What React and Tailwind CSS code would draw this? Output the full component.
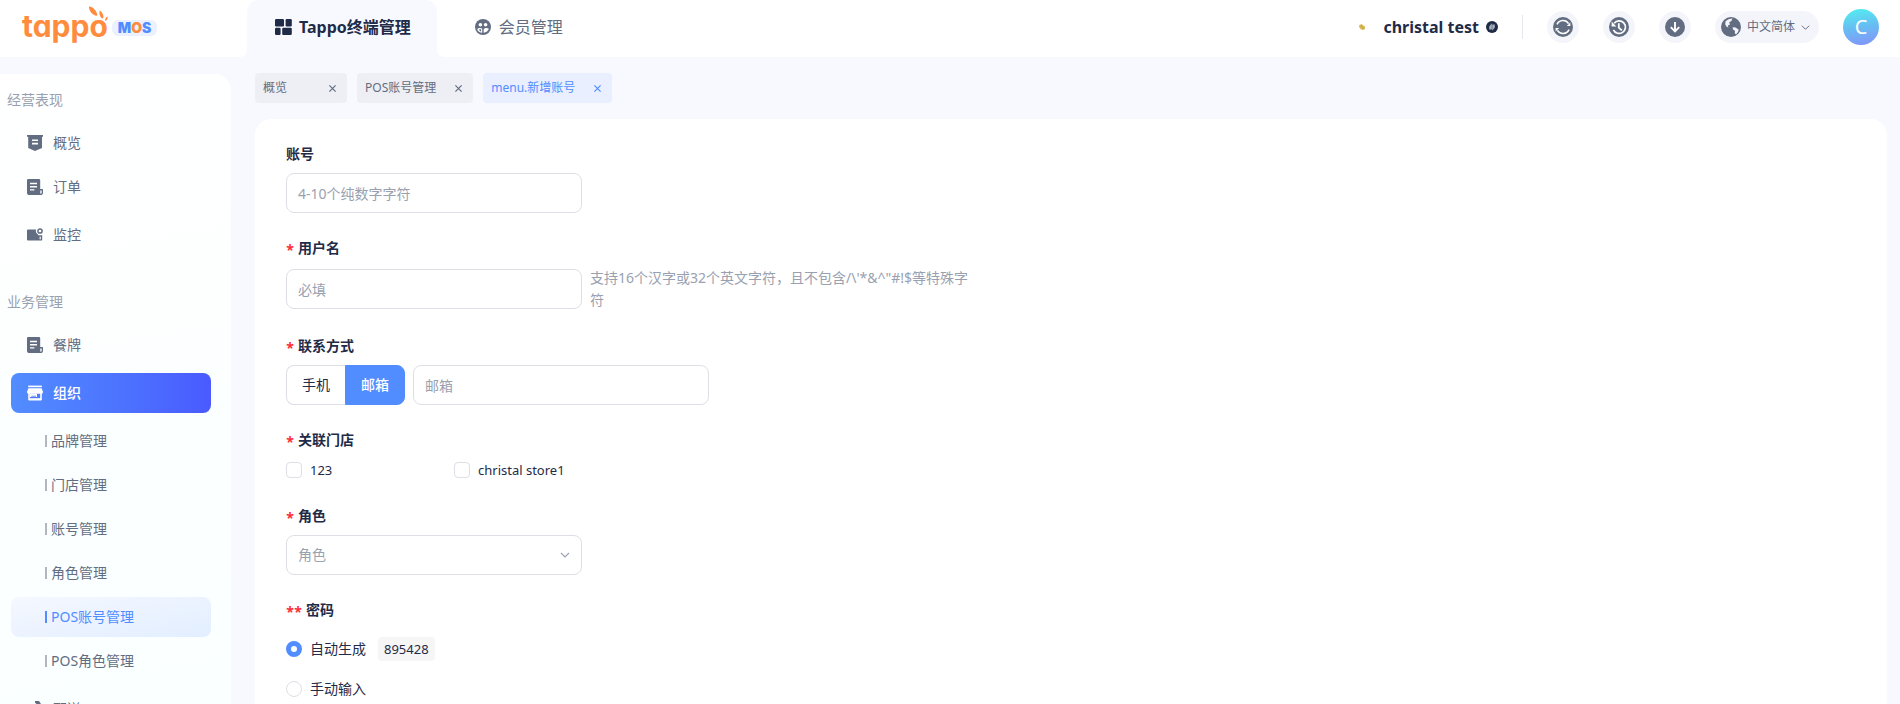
import { useState } from "react";

const CONCAVE = "absolute bottom-0 h-2 w-2";

/* ---------- icons ---------- */

function GridIcon() {
  return (
    <svg width="17" height="16" viewBox="0 0 17 16" fill="currentColor" aria-hidden="true">
      <rect x="0" y="0" width="9" height="7.4" rx="1.2" />
      <rect x="10.6" y="0" width="6.2" height="7.4" rx="1.2" />
      <rect x="0" y="8.8" width="5.6" height="7.2" rx="1.2" />
      <rect x="7.2" y="8.8" width="9.6" height="7.2" rx="1.2" />
    </svg>
  );
}

function MembersIcon() {
  return (
    <svg width="16" height="16" viewBox="0 0 16 16" aria-hidden="true">
      <circle cx="8" cy="8" r="8" fill="currentColor" />
      <circle cx="5.4" cy="5.8" r="1.8" fill="#fff" />
      <circle cx="10.6" cy="5.8" r="1.8" fill="#fff" />
      <path d="M2.2 10.2C3 8.8 5.6 8.4 7.2 9.6V13.8C4.8 13.6 2.8 12.4 2.2 10.2Z" fill="#fff" />
      <path d="M8.6 10.4C9.8 8.8 12.4 8.6 13.8 9.8C13.2 12 11.2 13.6 8.6 13.8Z" fill="#fff" />
      <path d="M4 10.8C4.8 10.2 5.6 10.2 6.2 10.5L6 12.4C5 12.2 4.3 11.6 4 10.8Z" fill="currentColor" />
    </svg>
  );
}

function BannerIcon() {
  return (
    <svg width="16" height="16" viewBox="0 0 16 16" aria-hidden="true">
      <path d="M0 0H16V1.8H15V13L8 16L1.2 13V1.8H0Z" fill="currentColor" />
      <path d="M5 4.4H11V6H5ZM5 7.8H11V9.4H5Z" fill="#fff" />
    </svg>
  );
}

function OrderIcon() {
  return (
    <svg width="16" height="16" viewBox="0 0 16 16" aria-hidden="true">
      <path
        d="M1.2 0H12A1.2 1.2 0 0 1 13.2 1.2V10H15.4Q16 10 16 10.6V13.4A2.6 2.6 0 0 1 13.4 16H2.6A2.6 2.6 0 0 1 0 13.4V1.2A1.2 1.2 0 0 1 1.2 0Z"
        fill="currentColor"
      />
      <path d="M3 3.8H10V5.2H3ZM3 7H10V8.4H3ZM3 10.2H7.4V11.6H3Z" fill="#fff" />
      <path d="M13.3 11.4H14.7V13.4A1.2 1.2 0 0 1 13.3 14.6Z" fill="#fff" />
    </svg>
  );
}

function MonitorIcon() {
  return (
    <svg width="16" height="16" viewBox="0 0 16 16" aria-hidden="true">
      <path d="M1 2.4H9.2A4 4 0 0 0 10.4 7L11 7.6V13.6H1A1 1 0 0 1 0 12.6V3.4A1 1 0 0 1 1 2.4Z" fill="currentColor" />
      <circle cx="13" cy="4" r="2.1" fill="none" stroke="currentColor" strokeWidth="1.5" />
      <path d="M10.8 8.2H15.2V12.4Q15.2 13.6 14 13.6H10.8Z" fill="currentColor" />
      <path d="M12.6 9.8H13.8V12.2H12.6Z" fill="#fff" />
    </svg>
  );
}

function ShopIcon() {
  return (
    <svg width="16" height="16" viewBox="0 0 16 16" aria-hidden="true">
      <path d="M1.2 0.6H14.8V2.2H1.2Z" fill="currentColor" />
      <path d="M1.4 3.2H14.6L16 6.8Q15.9 8.6 14.8 8.8V14.4Q14.8 15.4 13.8 15.4H2.2Q1.2 15.4 1.2 14.4V8.8Q0.1 8.6 0 6.8Z" fill="currentColor" />
      <path d="M2.8 8.8H13.2V13.2H2.8Z" fill="#4f7dff" />
      <path d="M2.8 8.8H10V12H2.8Z" fill="currentColor" />
      <path d="M4.2 10.6H9V12H4.2Z" fill="#8fb0ff" />
    </svg>
  );
}

function DeliveryIcon() {
  return (
    <svg width="16" height="16" viewBox="0 0 16 16" aria-hidden="true">
      <path d="M8 0H12L14 3H16V5.4H14.2L15 9H11.4L10 5L8.6 3.6L4.8 9H0.6Q1 5 4.6 4.6H7L9.4 2H8Z" fill="currentColor" />
      <circle cx="3.6" cy="12" r="2.2" fill="none" stroke="currentColor" strokeWidth="1.6" />
      <circle cx="12.8" cy="12" r="2.2" fill="none" stroke="currentColor" strokeWidth="1.6" />
    </svg>
  );
}

function SyncIcon() {
  return (
    <svg width="20" height="20" viewBox="0 0 20 20" aria-hidden="true">
      <circle cx="10" cy="10" r="10" fill="currentColor" />
      <path d="M4 7.4A6.6 6.6 0 0 1 15.6 6.6" fill="none" stroke="#fff" strokeWidth="1.6" />
      <path d="M16 12.6A6.6 6.6 0 0 1 4.4 13.4" fill="none" stroke="#fff" strokeWidth="1.6" />
      <path d="M17.4 5.4V9H13.8Z" fill="#fff" />
      <path d="M2.6 14.6V11H6.2Z" fill="#fff" />
    </svg>
  );
}

function HistoryIcon() {
  return (
    <svg width="20" height="20" viewBox="0 0 20 20" aria-hidden="true">
      <circle cx="10" cy="10" r="10" fill="currentColor" />
      <path d="M5.2 6.2A6.3 6.3 0 1 1 4.4 12.8" fill="none" stroke="#fff" strokeWidth="1.7" />
      <path d="M2.6 4.6V9.6H7.4Z" fill="#fff" />
      <path d="M9.8 6.2V10.6L12.8 13.4" fill="none" stroke="#fff" strokeWidth="1.8" />
    </svg>
  );
}

function DownloadIcon() {
  return (
    <svg width="20" height="20" viewBox="0 0 20 20" aria-hidden="true">
      <circle cx="10" cy="10" r="10" fill="currentColor" />
      <path d="M10 5V14M5.8 10.2L10 14.4L14.2 10.2" fill="none" stroke="#fff" strokeWidth="1.9" />
    </svg>
  );
}

function GlobeIcon() {
  return (
    <svg width="20" height="20" viewBox="0 0 20 20" aria-hidden="true">
      <circle cx="10" cy="10" r="10" fill="currentColor" />
      <path d="M4.6 4.2Q7.4 1.4 11.4 1.6L10.4 4L8.2 5.2L9 7.4L6.8 8.4L7.4 10.4L5.4 9.6L4.2 7.2Z" fill="#f4f5fb" />
      <path d="M11.6 10.2L14.6 10.6L17.8 12.8Q17.2 15.6 15.2 17.2L13.8 16.4L14 13.8L12 12.4Z" fill="#f4f5fb" />
    </svg>
  );
}

function SwitchIcon() {
  return (
    <svg width="12" height="12" viewBox="0 0 12 12" aria-hidden="true">
      <circle cx="6" cy="6" r="6" fill="currentColor" />
      <path d="M5.8 2.2V8.4H3.2V5.6L5.8 2.2ZM6.2 9.8V3.6H8.8V6.4L6.2 9.8Z" fill="#aab1c0" />
    </svg>
  );
}

function CoinIcon() {
  return (
    <svg width="6" height="6" viewBox="0 0 6 6" aria-hidden="true">
      <path d="M0 1.2L2.6 0L4.2 1.2L6 2.6V5L4 6L1.6 5.2L0.4 3.4Z" fill="#dcbb58" />
      <path d="M1.4 1.8L3.2 2.6M3 4.2L4.8 3.8" stroke="#9c8436" strokeWidth="0.6" />
    </svg>
  );
}

function ChevronDown({ size }) {
  return (
    <svg width={size} height={size} viewBox="0 0 10 10" fill="none" stroke="currentColor" strokeWidth="1.1" aria-hidden="true">
      <path d="M1 3L5 7L9 3" />
    </svg>
  );
}

function CloseIcon() {
  return (
    <svg width="9" height="9" viewBox="0 0 9 9" fill="none" stroke="currentColor" strokeWidth="1.2" aria-hidden="true">
      <path d="M1.4 1.4L7.6 7.6M7.6 1.4L1.4 7.6" />
    </svg>
  );
}

/* ---------- header ---------- */

function Logo() {
  return (
    <a href="#home" className="flex items-center" aria-label="tappo MOS">
      <span className="relative text-[30px] leading-10 font-bold text-[#ff8b3d] [font-family:Inter,sans-serif] [font-feature-settings:'cv11']">
        tappo
        <svg className="absolute top-0 right-0" width="20" height="16" viewBox="0 0 20 16" fill="#ff8b3d" aria-hidden="true">
          <path d="M1 0.6C3.6 0 9 4.6 9.4 9.6C5.6 10.6 0.6 5.2 1 0.6Z" />
          <path d="M11.6 4.8C13.8 5 16 9.6 15.2 12.6C12.4 12.6 10.8 8 11.6 4.8Z" />
          <path d="M19.6 10.4C20.2 12 18.8 14.8 17.2 15C16.8 13 18 10.6 19.6 10.4Z" />
        </svg>
      </span>
      <span className="mt-1 ml-1 flex h-4 items-center rounded-md bg-[#ebf1ff] px-[6px] text-sm leading-4 font-black text-[#528dff] [font-family:Inter,sans-serif]">
        M<span className="text-[#ff8b3d]">O</span>S
      </span>
    </a>
  );
}

function RoundButton({ label, children }) {
  return (
    <button type="button" aria-label={label} className="flex h-8 w-8 items-center justify-center rounded-full bg-[#f4f5fb] text-[#636d82]">
      {children}
    </button>
  );
}

function Header() {
  return (
    <header className="flex h-[57px] shrink-0 items-center bg-white pr-[21px]">
      <div className="w-[247px] shrink-0 pb-[6px] pl-[22px]">
        <Logo />
      </div>
      <nav className="flex h-full items-stretch">
        <a
          href="#terminal"
          className="relative flex items-center gap-[7px] rounded-t-xl bg-[#f8f9fe] pr-[26px] pb-[3px] pl-7 text-base font-bold text-[#1f2b47]"
        >
          <span className={CONCAVE + " -left-2 bg-[radial-gradient(circle_at_0_0,#fff_8px,#f8f9fe_8px)]"} />
          <GridIcon />
          <span>Tappo终端管理</span>
          <span className={CONCAVE + " -right-2 bg-[radial-gradient(circle_at_100%_0,#fff_8px,#f8f9fe_8px)]"} />
        </a>
        <a href="#members" className="flex items-center gap-2 pb-[3px] pl-[38px] text-base text-[#636d82]">
          <MembersIcon />
          <span>会员管理</span>
        </a>
      </nav>
      <div className="ml-auto flex items-center gap-6 pb-[3px]">
        <div className="flex items-center text-[#1f2b47]">
          <CoinIcon />
          <span className="mr-[7px] ml-[18px] text-base font-bold">christal test</span>
          <SwitchIcon />
        </div>
        <span className="h-6 w-px bg-[#e6e8ee]" />
        <RoundButton label="同步"><SyncIcon /></RoundButton>
        <RoundButton label="历史"><HistoryIcon /></RoundButton>
        <RoundButton label="下载"><DownloadIcon /></RoundButton>
        <button type="button" className="flex h-8 items-center gap-[6px] rounded-full bg-[#f4f5fb] pr-[9px] pl-[6px] text-xs text-[#636d82]">
          <GlobeIcon />
          <span>中文简体</span>
          <ChevronDown size={9} />
        </button>
        <button type="button" className="flex h-9 w-9 items-center justify-center rounded-full bg-linear-170 from-[#4ff0f0] via-[#66bdf2] to-[#8290fa] text-xl text-white">
          C
        </button>
      </div>
    </header>
  );
}

/* ---------- sidebar ---------- */

const ORG_ITEMS = ["品牌管理", "门店管理", "账号管理", "角色管理", "POS账号管理", "POS角色管理"];

function NavItem({ icon, label, active, group }) {
  return (
    <li className={group ? "py-1" : ""}>
      <a
        href={"#" + label}
        className={
          "flex h-10 items-center gap-[10px] rounded-lg pl-4 " +
          (active ? "bg-linear-to-r from-[#528dff] to-[#4a5aff] font-medium text-white" : "text-[#636d82]")
        }
      >
        {icon}
        <span>{label}</span>
      </a>
    </li>
  );
}

function SubItem({ label, active }) {
  return (
    <li>
      <a
        href={"#" + label}
        className={
          "flex h-10 items-center gap-1 rounded-lg pl-[34px] " +
          (active ? "bg-linear-to-br from-[#f5f8ff] to-[#e2eeff] text-[#528dff]" : "text-[#636d82]")
        }
      >
        <span className={"h-3 w-[2px] " + (active ? "bg-[#528dff]" : "bg-[#b1b6c0]")} />
        <span>{label}</span>
      </a>
    </li>
  );
}

function Sidebar() {
  return (
    <aside className="w-[231px] shrink-0 overflow-hidden rounded-tr-2xl bg-linear-170 from-white to-[#faffff] pt-[15px] text-sm">
      <h2 className="mb-3 pl-[7px] leading-[22px] text-[#99a1b0]">经营表现</h2>
      <ul className="mr-5 ml-[11px] flex flex-col gap-1">
        <NavItem icon={<BannerIcon />} label="概览" />
        <NavItem icon={<OrderIcon />} label="订单" />
        <NavItem icon={<MonitorIcon />} label="监控" group />
      </ul>
      <h2 className="mt-8 mb-3 pl-[7px] leading-[22px] text-[#99a1b0]">业务管理</h2>
      <ul className="mr-5 ml-[11px] flex flex-col gap-1">
        <NavItem icon={<OrderIcon />} label="餐牌" />
        <NavItem icon={<ShopIcon />} label="组织" active group />
        {ORG_ITEMS.map((label) => (
          <SubItem key={label} label={label} active={label === "POS账号管理"} />
        ))}
        <NavItem icon={<DeliveryIcon />} label="配送" group />
      </ul>
    </aside>
  );
}

/* ---------- page tabs ---------- */

function PageTab({ label, active }) {
  return (
    <div
      className={
        "flex h-[30px] min-w-[92px] items-center justify-between gap-[18px] rounded-sm pr-[10px] pl-2 text-xs " +
        (active ? "bg-[#e9effe] text-[#528dff]" : "bg-[#eeeff4] text-[#636d82]")
      }
    >
      <a href={"#" + label}>{label}</a>
      <button type="button" aria-label={"关闭 " + label}>
        <CloseIcon />
      </button>
    </div>
  );
}

/* ---------- form ---------- */

const FIELD = "h-10 w-[296px] rounded-lg border border-[#dddfe4] bg-white px-[11px] text-sm text-[#1f2b47] placeholder:text-[#99a1b0] outline-none focus:border-[#528dff]";

function Label({ htmlFor, stars = 0, children }) {
  const Tag = htmlFor ? "label" : "div";
  return (
    <Tag htmlFor={htmlFor} className="mb-2 flex leading-[22px] font-bold">
      {stars > 0 && (
        <span className="mr-1 flex pt-1 leading-[18px] text-[#ff2d3a]">
          {Array.from({ length: stars }, (_, i) => (
            <span key={i} className="w-2 text-center">*</span>
          ))}
        </span>
      )}
      <span>{children}</span>
    </Tag>
  );
}

function StoreCheck({ label }) {
  return (
    <label className="flex w-[168px] items-center gap-2 text-[13px] leading-[22px]">
      <input type="checkbox" className="h-4 w-4 appearance-none rounded-sm border border-[#dddfe4] bg-white checked:border-[#528dff] checked:bg-[#528dff]" />
      <span>{label}</span>
    </label>
  );
}

const RADIO = "h-4 w-4 appearance-none rounded-full border border-[#dddfe4] bg-white checked:border-[5px] checked:border-[#528dff]";

function AccountForm() {
  const [contact, setContact] = useState("邮箱");
  const [mode, setMode] = useState("auto");
  return (
    <form className="flex flex-col gap-6 text-sm text-[#1f2b47]">
      <div>
        <Label htmlFor="account">账号</Label>
        <input id="account" className={FIELD + " block"} placeholder="4-10个纯数字字符" />
      </div>

      <div>
        <Label htmlFor="username" stars={1}>用户名</Label>
        <div className="flex items-center gap-2">
          <input id="username" className={FIELD} placeholder="必填" />
          <p className="max-w-[384px] leading-[22px] text-[#99a1b0]">{"支持16个汉字或32个英文字符，且不包含/\\'*&^\"#!$等特殊字符"}</p>
        </div>
      </div>

      <div>
        <Label htmlFor="contact" stars={1}>联系方式</Label>
        <div className="flex gap-2">
          <div className="flex">
            {["手机", "邮箱"].map((name, i) => (
              <button
                key={name}
                type="button"
                onClick={() => setContact(name)}
                className={
                  "h-10 border px-[15px] " +
                  (i === 0 ? "rounded-l-lg border-r-0 " : "rounded-r-lg ") +
                  (contact === name ? "border-[#528dff] bg-[#528dff] font-medium text-white" : "border-[#dddfe4] bg-white")
                }
              >
                {name}
              </button>
            ))}
          </div>
          <input id="contact" className={FIELD} placeholder={contact} />
        </div>
      </div>

      <div>
        <Label stars={1}>关联门店</Label>
        <div className="flex">
          <StoreCheck label="123" />
          <StoreCheck label="christal store1" />
        </div>
      </div>

      <div>
        <Label htmlFor="role" stars={1}>角色</Label>
        <div className="relative w-[296px]">
          <select id="role" defaultValue="" className={FIELD + " block appearance-none text-[#99a1b0]!"}>
            <option value="">角色</option>
          </select>
          <span className="pointer-events-none absolute inset-y-0 right-3 flex items-center text-[#99a1b0]">
            <ChevronDown size={10} />
          </span>
        </div>
      </div>

      <div>
        <Label stars={2}>密码</Label>
        <div className="flex h-10 items-center gap-3">
          <label className="flex items-center gap-2">
            <input type="radio" name="mode" className={RADIO} checked={mode === "auto"} onChange={() => setMode("auto")} />
            <span>自动生成</span>
          </label>
          <span className="flex h-6 items-center rounded-sm bg-[#f6f6f7] px-[6px] text-[13px]">895428</span>
        </div>
        <div className="flex h-10 items-center">
          <label className="flex items-center gap-2">
            <input type="radio" name="mode" className={RADIO} checked={mode === "manual"} onChange={() => setMode("manual")} />
            <span>手动输入</span>
          </label>
        </div>
      </div>
    </form>
  );
}

export default function App() {
  return (
    <div className="flex h-screen flex-col overflow-hidden bg-[#f8f9fe] [font-family:'Noto_Sans','Noto_Sans_CJK_SC',sans-serif]">
      <Header />
      <div className="flex min-h-0 flex-1 pt-[17px]">
        <Sidebar />
        <main className="flex min-w-0 flex-1 flex-col pr-[13px] pl-6">
          <div className="-mt-px mb-4 flex shrink-0 gap-[10px]">
            <PageTab label="概览" />
            <PageTab label="POS账号管理" />
            <PageTab label="menu.新增账号" active />
          </div>
          <section className="min-h-0 flex-1 overflow-hidden rounded-t-2xl bg-white px-[31px] pt-6">
            <AccountForm />
          </section>
        </main>
      </div>
    </div>
  );
}
